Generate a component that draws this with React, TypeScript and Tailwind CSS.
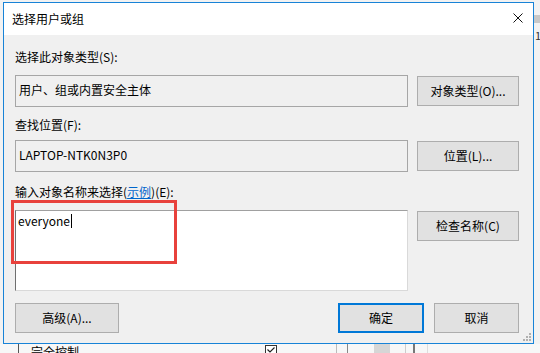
import React from "react";

const font = { fontFamily: '"Noto Sans CJK SC", "Noto Sans", sans-serif' };

function Btn({ children, w, primary }: { children: React.ReactNode; w: string; primary?: boolean }) {
  return (
    <div
      className={
        "h-[30px] flex items-center justify-center bg-[#e1e1e1] text-[12px] text-black leading-none " +
        w +
        (primary ? " border-2 border-[#0078d7]" : " border border-[#adadad]")
      }
    >
      {children}
    </div>
  );
}

export default function App() {
  return (
    <div className="relative w-[540px] h-[353px] overflow-hidden bg-[#f2f2f2]" style={font}>
      {/* background window: right strip */}
      <div className="absolute left-[534px] top-[15px] w-[6px] h-[8px] bg-[#c8c8c8]" />
      <div className="absolute left-[535px] top-[29px] text-[11px] leading-[12px] text-[#333]">1</div>

      {/* background window: bottom strip */}
      <div className="absolute left-0 top-[344px] w-[540px] h-[9px] bg-[#f7f7f7]">
        <div className="absolute left-[18px] top-0 w-px h-[9px] bg-[#555]" />
        <div className="absolute left-[31px] top-[2px] text-[12px] leading-[12px] text-black">完全控制</div>
        <div className="absolute left-[265px] top-[1px] w-[12px] h-[12px] border border-[#333] bg-white">
          <svg width="10" height="10" viewBox="0 0 10 10" className="block">
            <path d="M1.5 3.5 L4 6 L8.5 1.5" stroke="#222" strokeWidth="1.2" fill="none" />
          </svg>
        </div>
        <div className="absolute left-[336px] top-0 w-px h-[9px] bg-[#bbb]" />
        <div className="absolute left-[347px] top-0 w-px h-[9px] bg-[#888]" />
        <div className="absolute left-[374px] top-0 w-[16px] h-[9px] bg-[#d6d6d6]" />
        <div className="absolute left-[405px] top-0 w-px h-[9px] bg-[#ccc]" />
        <div className="absolute left-[413px] top-0 w-[2px] h-[9px] bg-[#777]" />
        <div className="absolute left-[427px] top-0 w-px h-[9px] bg-[#ddd]" />
      </div>

      {/* dialog window */}
      <div className="absolute left-[3px] top-[2px] w-[531px] h-[342px] border border-[#1883d7] bg-[#f0f0f0] flex flex-col">
        {/* title bar */}
        <div className="h-[32px] bg-white flex items-center justify-between pl-[8px] pr-[10px]">
          <span className="text-[12px] leading-[16px] text-black">选择用户或组</span>
          <svg width="10" height="10" viewBox="0 0 10 10" className="block -mt-[2px]">
            <path d="M0.5 0.5 L9.5 9.5 M9.5 0.5 L0.5 9.5" stroke="#111" strokeWidth="1" />
          </svg>
        </div>

        {/* body */}
        <div className="relative flex-1 flex flex-col pl-[11px] pr-[14px] pt-[14px] text-[12px] text-black">
          <div className="leading-[16px]">选择此对象类型(S):</div>
          <div className="mt-[10px] flex items-center gap-[9px]">
            <div className="w-[393px] h-[32px] border border-[#a6a6a6] bg-[#f0f0f0] px-[3px] pt-[7px] leading-[14px]">
              用户、组或内置安全主体
            </div>
            <Btn w="w-[102px]">对象类型(O)...</Btn>
          </div>

          <div className="mt-[10px] leading-[16px]">查找位置(F):</div>
          <div className="mt-[7px] flex items-center gap-[9px]">
            <div className="w-[393px] h-[32px] border border-[#a6a6a6] bg-[#f0f0f0] px-[3px] pt-[7px] leading-[14px]">
              LAPTOP-NTK0N3P0
            </div>
            <Btn w="w-[102px]">位置(L)...</Btn>
          </div>

          <div className="mt-[12px] leading-[16px]">
            输入对象名称来选择(<span className="text-[#0066cc] underline">示例</span>)(E):
          </div>
          <div className="mt-[10px] flex items-start gap-[9px]">
            <div className="w-[393px] h-[81px] bg-white border border-[#d9d9d9] border-t-[#a0a0a0] border-l-[#6f6f6f] px-[2px] pt-[3px] leading-[14px] flex items-start">
              <span>everyone</span>
              <span className="inline-block w-px h-[14px] bg-black ml-[1px]" />
            </div>
            <div className="mt-[1px]">
              <Btn w="w-[102px]">检查名称(C)</Btn>
            </div>
          </div>

          <div className="mt-[12px] flex items-center justify-between">
            <Btn w="w-[104px]">高级(A)...</Btn>
            <div className="flex items-center gap-[10px]">
              <Btn w="w-[86px]" primary>
                确定
              </Btn>
              <Btn w="w-[85px]">取消</Btn>
            </div>
          </div>

          {/* size grip */}
          <div className="absolute right-[2px] bottom-[2px] w-[9px] h-[9px]">
            <div className="absolute right-0 bottom-0 w-[2px] h-[2px] bg-[#b0b0b0]" />
            <div className="absolute right-[3px] bottom-0 w-[2px] h-[2px] bg-[#b0b0b0]" />
            <div className="absolute right-[6px] bottom-0 w-[2px] h-[2px] bg-[#b0b0b0]" />
            <div className="absolute right-0 bottom-[3px] w-[2px] h-[2px] bg-[#b0b0b0]" />
            <div className="absolute right-[3px] bottom-[3px] w-[2px] h-[2px] bg-[#b0b0b0]" />
            <div className="absolute right-0 bottom-[6px] w-[2px] h-[2px] bg-[#b0b0b0]" />
          </div>
        </div>
      </div>

      {/* red annotation rectangle */}
      <div className="absolute left-[11px] top-[200px] w-[166px] h-[64px] border-[3px] border-[#e8413c]" />
    </div>
  );
}
